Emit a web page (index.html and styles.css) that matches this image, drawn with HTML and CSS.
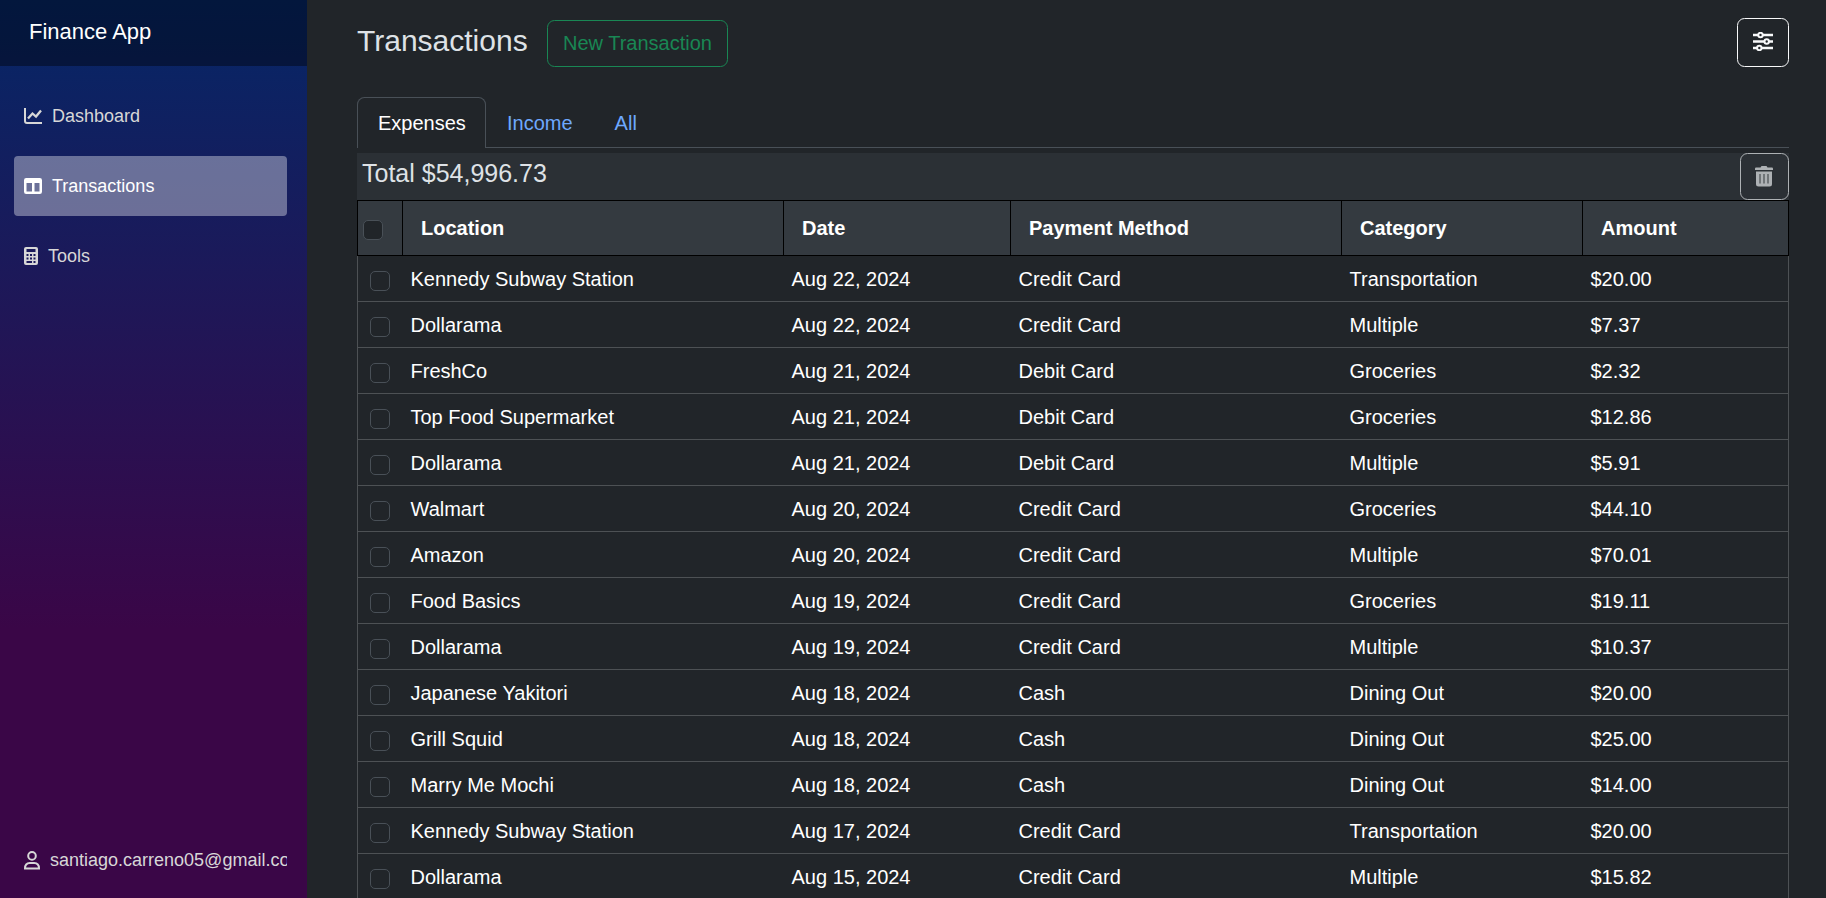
FILE: index.html
```html
<!DOCTYPE html>
<html lang="en">
<head>
<meta charset="utf-8">
<title>Transactions</title>
<link rel="stylesheet" href="styles.css">
</head>
<body>
<div class="page">
  <aside class="sidebar">
    <div class="brand">Finance App</div>
    <nav class="nav">
      <a class="nav-link"><svg width="18" height="18" viewBox="0 0 18 18" fill="none" stroke="currentColor" stroke-width="2"><path d="M1 1v13a2 2 0 0 0 2 2h15"/><path stroke-width="2.300" d="M4 11.500 8.500 6.500l3.500 3L17 3.500"/></svg><span>Dashboard</span></a>
      <a class="nav-link active"><svg width="18" height="18" viewBox="0 0 18 18" fill="currentColor"><path fill-rule="evenodd" d="M2.200 1h13.600A2.200 2.200 0 0 1 18 3.200v11.600a2.200 2.200 0 0 1-2.200 2.200H2.200A2.200 2.200 0 0 1 0 14.800V3.200A2.200 2.200 0 0 1 2.200 1zM2.500 6v8.500H8V6zM10.500 6v8.500h5V6z"/></svg><span>Transactions</span></a>
      <a class="nav-link tools"><svg width="14" height="18" viewBox="0 0 14 18" fill="currentColor"><path fill-rule="evenodd" d="M2 0h10a2 2 0 0 1 2 2v14a2 2 0 0 1-2 2H2a2 2 0 0 1-2-2V2a2 2 0 0 1 2-2zM2.500 2v3h9V2zM2.500 7v2h2V7zm3.500 0v2h2V7zm3.500 0v2h2V7zM2.500 10.500v2h2v-2zm3.500 0v2h2v-2zm3.500 0v2h2v-2zM2.500 14v2h5.500v-2zm7 0v2h2v-2z"/></svg><span>Tools</span></a>
    </nav>
    <div class="user"><svg width="16" height="19" viewBox="0 0 16 19" fill="none" stroke="currentColor" stroke-width="2"><circle cx="8" cy="4.900" r="3.800"/><path d="M1 17.500c0-3.500 1.800-5.500 4.800-5.500h4.400c3 0 4.800 2 4.800 5.500z"/></svg><span>santiago.carreno05@gmail.com</span></div>
  </aside>
  <main class="content">
    <header class="head">
      <h1>Transactions</h1>
      <button class="btn new">New Transaction</button>
      <button class="btn filter"><svg width="20" height="19" viewBox="0 0 20 19" fill="none" stroke="currentColor" stroke-width="2.500"><path d="M0 3h5M10 3h10M0 9.500h11M16 9.500h4M0 16h4M9 16h11"/><circle cx="7.500" cy="3" r="2.200" stroke-width="2"/><circle cx="13.700" cy="9.500" r="2.200" stroke-width="2"/><circle cx="6.300" cy="16" r="2.200" stroke-width="2"/></svg></button>
    </header>
    <div class="tabs"><a class="tab on">Expenses</a><a class="tab">Income</a><a class="tab">All</a></div>
    <div class="total"><span>Total $54,996.73</span><button class="btn trash"><svg width="18" height="21" viewBox="0 0 18 21"><path fill="currentColor" d="M0 2.500 .6 1.500H5.500L6.500 0h5l1 1.500h4.900l.6 1V4H0zM1 5.500h16V18a2.500 2.500 0 0 1-2.500 2.500h-11A2.500 2.500 0 0 1 1 18z"/><path class="slots" d="M5 8v9.500M9 8v9.500M13 8v9.500"/></svg></button></div>
    <table class="grid">
      <colgroup><col class="c0"><col class="c1"><col class="c2"><col class="c3"><col class="c4"><col class="c5"></colgroup>
      <thead><tr><th class="pick"><i class="check"></i></th><th>Location</th><th>Date</th><th>Payment Method</th><th>Category</th><th>Amount</th></tr></thead>
      <tbody>
        <tr><td class="pick"><i class="check"></i></td><td>Kennedy Subway Station</td><td>Aug 22, 2024</td><td>Credit Card</td><td>Transportation</td><td>$20.00</td></tr>
        <tr><td class="pick"><i class="check"></i></td><td>Dollarama</td><td>Aug 22, 2024</td><td>Credit Card</td><td>Multiple</td><td>$7.37</td></tr>
        <tr><td class="pick"><i class="check"></i></td><td>FreshCo</td><td>Aug 21, 2024</td><td>Debit Card</td><td>Groceries</td><td>$2.32</td></tr>
        <tr><td class="pick"><i class="check"></i></td><td>Top Food Supermarket</td><td>Aug 21, 2024</td><td>Debit Card</td><td>Groceries</td><td>$12.86</td></tr>
        <tr><td class="pick"><i class="check"></i></td><td>Dollarama</td><td>Aug 21, 2024</td><td>Debit Card</td><td>Multiple</td><td>$5.91</td></tr>
        <tr><td class="pick"><i class="check"></i></td><td>Walmart</td><td>Aug 20, 2024</td><td>Credit Card</td><td>Groceries</td><td>$44.10</td></tr>
        <tr><td class="pick"><i class="check"></i></td><td>Amazon</td><td>Aug 20, 2024</td><td>Credit Card</td><td>Multiple</td><td>$70.01</td></tr>
        <tr><td class="pick"><i class="check"></i></td><td>Food Basics</td><td>Aug 19, 2024</td><td>Credit Card</td><td>Groceries</td><td>$19.11</td></tr>
        <tr><td class="pick"><i class="check"></i></td><td>Dollarama</td><td>Aug 19, 2024</td><td>Credit Card</td><td>Multiple</td><td>$10.37</td></tr>
        <tr><td class="pick"><i class="check"></i></td><td>Japanese Yakitori</td><td>Aug 18, 2024</td><td>Cash</td><td>Dining Out</td><td>$20.00</td></tr>
        <tr><td class="pick"><i class="check"></i></td><td>Grill Squid</td><td>Aug 18, 2024</td><td>Cash</td><td>Dining Out</td><td>$25.00</td></tr>
        <tr><td class="pick"><i class="check"></i></td><td>Marry Me Mochi</td><td>Aug 18, 2024</td><td>Cash</td><td>Dining Out</td><td>$14.00</td></tr>
        <tr><td class="pick"><i class="check"></i></td><td>Kennedy Subway Station</td><td>Aug 17, 2024</td><td>Credit Card</td><td>Transportation</td><td>$20.00</td></tr>
        <tr><td class="pick"><i class="check"></i></td><td>Dollarama</td><td>Aug 15, 2024</td><td>Credit Card</td><td>Multiple</td><td>$15.82</td></tr>
      </tbody>
    </table>
  </main>
</div>
</body>
</html>
```

FILE: styles.css
```css
* { box-sizing: border-box; }
body { margin: 0; overflow: hidden; background: #212529; color: #dee2e6; font: 20px/30px "Liberation Sans", Arial, sans-serif; }
svg { display: block; flex: none; }
.page { display: flex; height: 898px; overflow: hidden; }
.sidebar { width: 307px; flex: none; display: flex; flex-direction: column; background: linear-gradient(180deg, rgb(5, 39, 103) 0%, #3a0647 70%); color: #d7d7d7; font-size: 18px; }
.brand { height: 66px; padding: 16px 29px; background: rgba(0, 0, 0, .4); color: #fff; font-size: 22px; line-height: 32px; }
.nav { display: flex; flex-direction: column; gap: 10px; padding: 20px 20px 0 14px; }
.nav-link { display: flex; align-items: center; gap: 10px; height: 60px; padding: 0 0 1px 10px; border-radius: 4px; }
.nav-link.active { background: rgba(255, 255, 255, .37); color: #fff; }
.user { display: flex; align-items: center; gap: 10px; margin: auto 20px 23px 24px; overflow: hidden; white-space: nowrap; }
.content { flex: 1; padding: 18px 37px 0 50px; }
.head { display: flex; align-items: flex-start; height: 79px; }
h1 { margin: 5px 0 0; font-size: 30px; line-height: 36px; font-weight: 500; width: 190px; }
.btn { display: flex; align-items: center; justify-content: center; padding: 0; background: none; border: 1px solid; border-radius: 7.500px; font: inherit; }
.new { width: 181px; height: 47px; margin-top: 2px; padding-bottom: 2px; color: #198754; }
.filter { width: 52px; height: 49px; margin-left: auto; padding-bottom: 2px; color: #f8f9fa; }
.tabs { display: flex; height: 51px; border-bottom: 1px solid #495057; }
.tab { height: 51px; padding: 11px 21px 9px; color: #6ea8fe; }
.tab.on { width: 129px; padding: 10px 20px; border: 1px solid #495057; border-bottom: 0; border-radius: 7.500px 7.500px 0 0; background: #212529; color: #fff; }
.total { display: flex; justify-content: space-between; margin-top: 5px; height: 47px; padding-left: 5px; background: #2b3035; font-size: 25px; line-height: 40px; }
.trash { width: 49px; height: 47px; padding-right: 1px; color: #adb1b4; }
.slots { fill: none; stroke: #5c6164; stroke-width: 1.500; }
.grid { width: 1432px; table-layout: fixed; border-collapse: collapse; color: #fff; }
.c0 { width: 45px; } .c1 { width: 381px; } .c2 { width: 227px; } .c3 { width: 331px; } .c4 { width: 241px; }
th { height: 55px; padding: 0 18px; border: 1px solid #000; background: #343a40; text-align: left; font-weight: 700; }
td { height: 46px; padding: 0 8px; border-bottom: 1px solid #4d5154; }
tbody tr { border-left: 1px solid #4d5154; border-right: 1px solid #4d5154; }
.check { display: block; width: 20px; height: 20px; border: 1px solid #495057; border-radius: 5px; background: #212529; }
th.pick { padding: 4px 0 0 5px; }
td.pick { padding: 4px 0 0 12px; }
```
